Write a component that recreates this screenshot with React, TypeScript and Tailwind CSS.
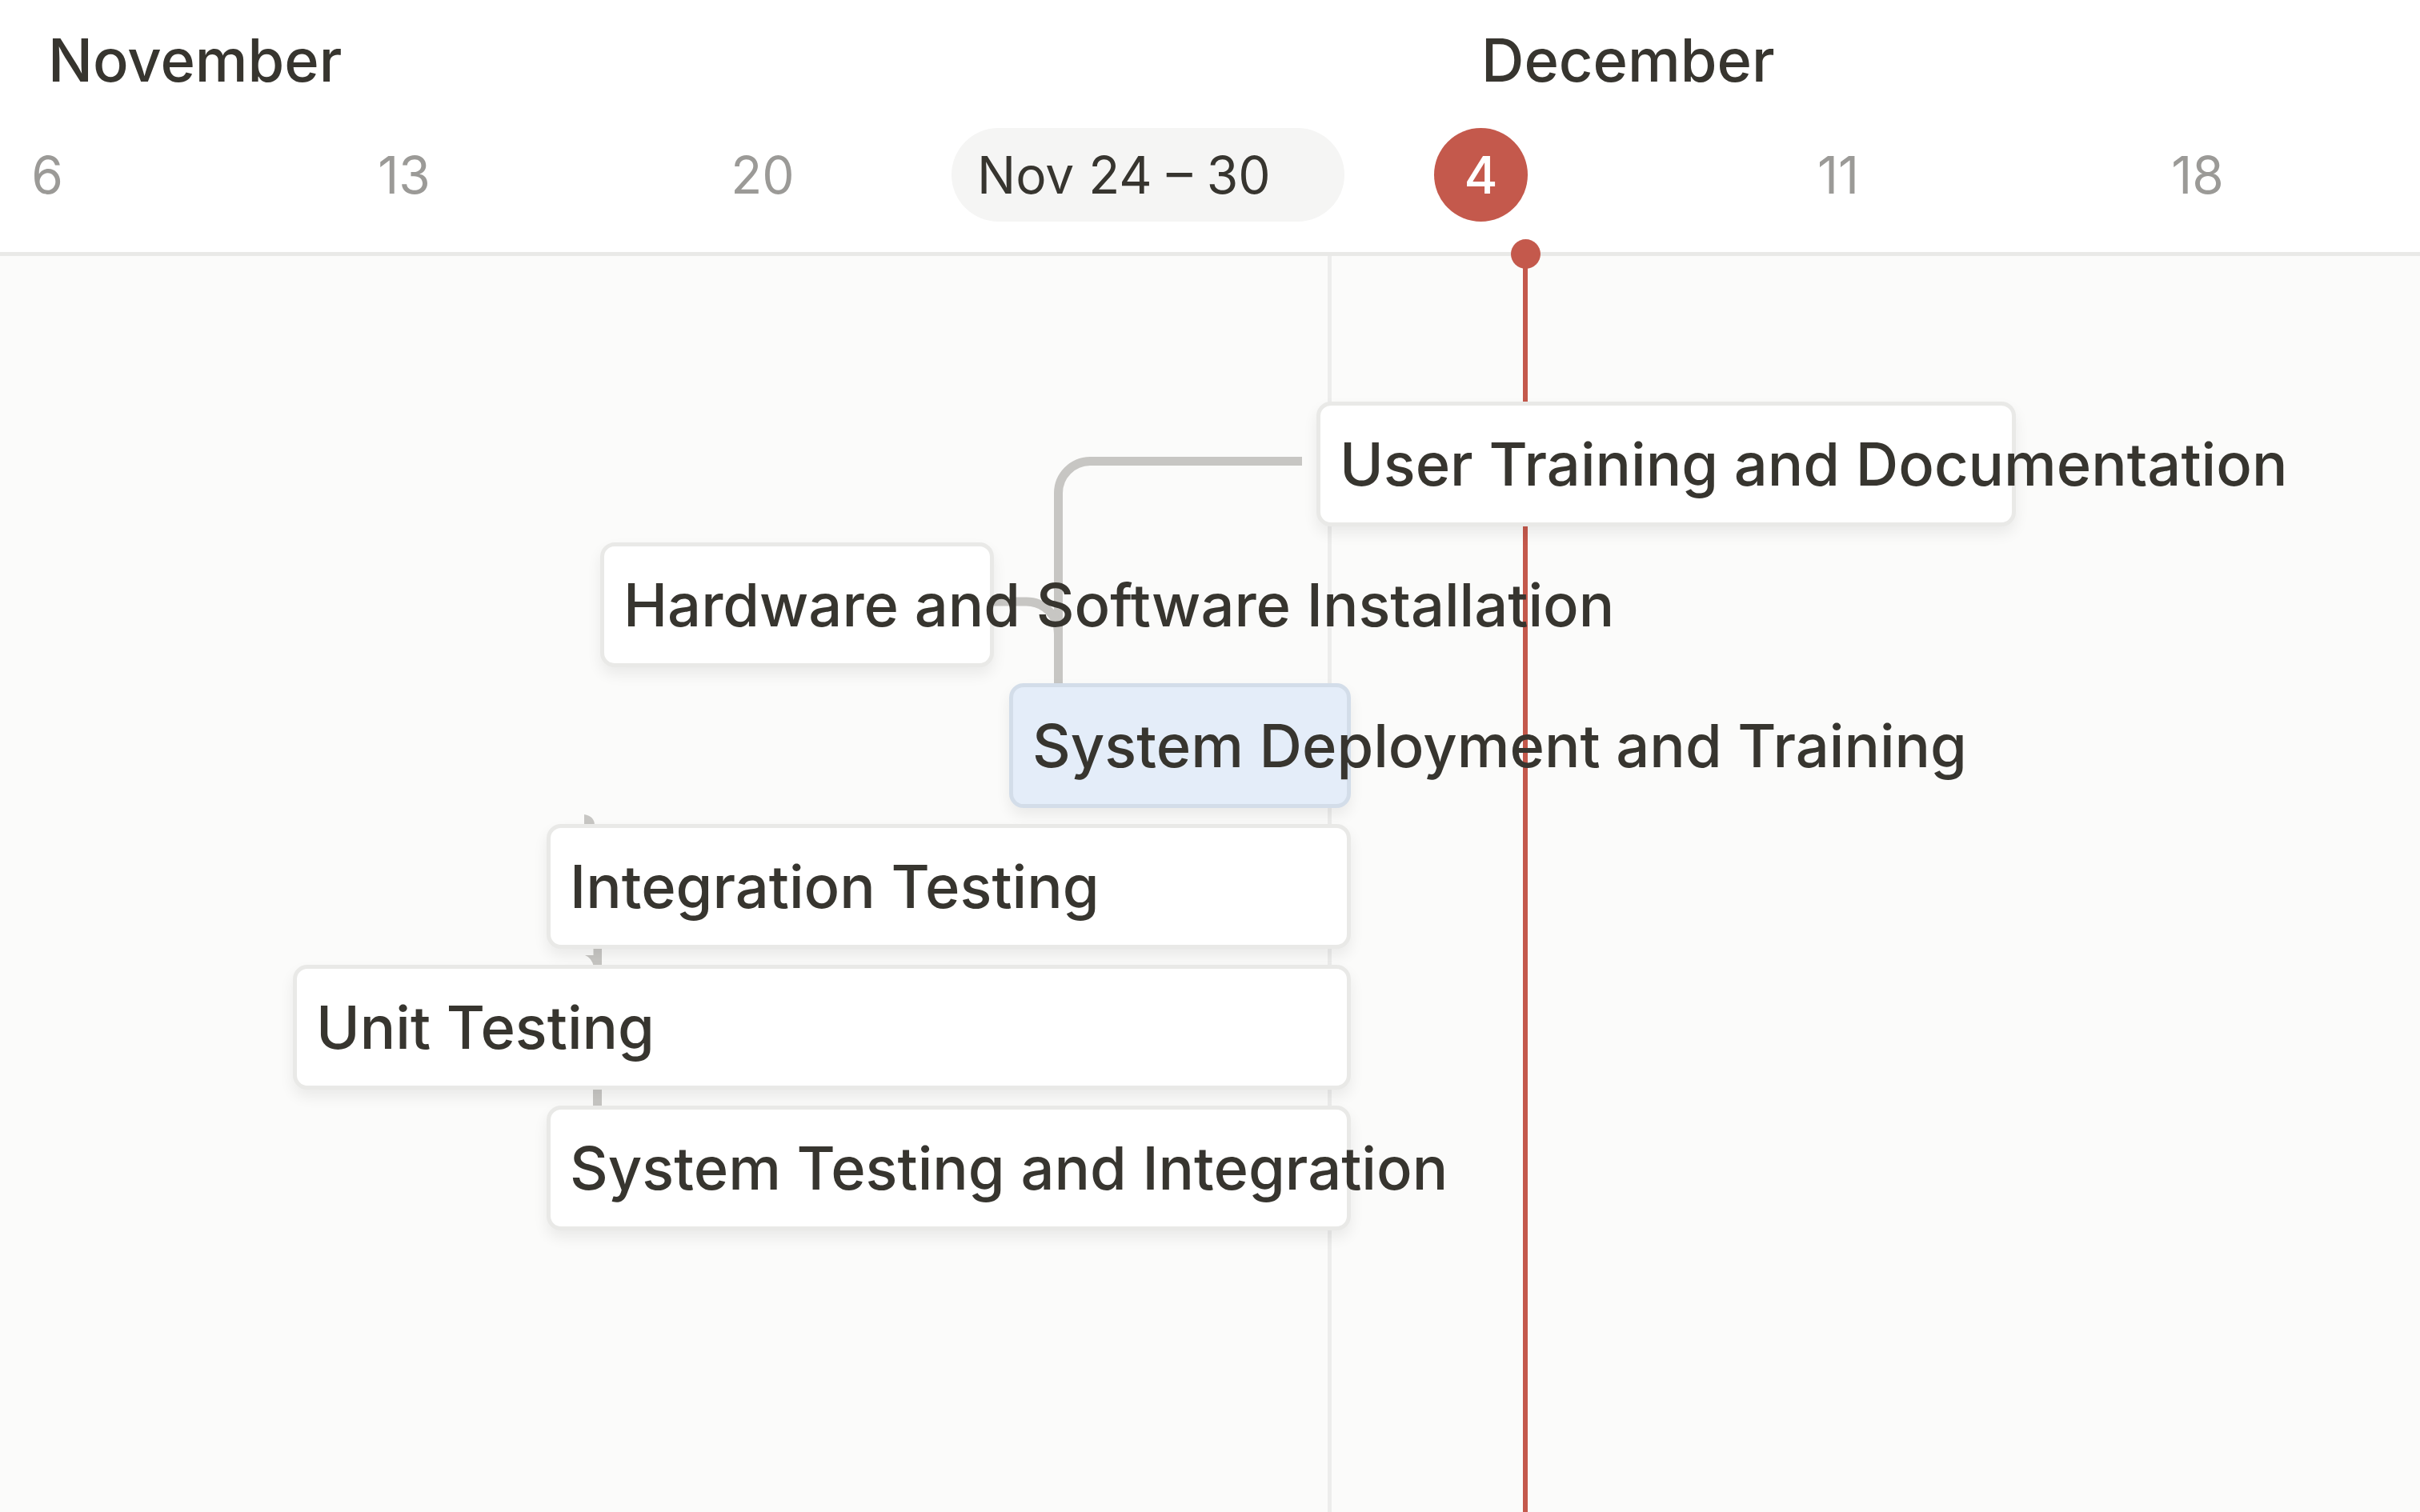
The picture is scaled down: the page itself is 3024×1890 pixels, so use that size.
import React from "react";

const bars = [
  { label: "User Training and Documentation", cls: "ml-[1645px] w-[874px] bg-white border-[#e9e9e7]" },
  { label: "Hardware and Software Installation", cls: "ml-[750px] w-[492px] bg-white border-[#e9e9e7]" },
  { label: "System Deployment and Training", cls: "ml-[1261px] w-[427px] bg-[#e4edf9] border-[#d3dde9]" },
  { label: "Integration Testing", cls: "ml-[683px] w-[1005px] bg-white border-[#e9e9e7]" },
  { label: "Unit Testing", cls: "ml-[366px] w-[1322px] bg-white border-[#e9e9e7]" },
  { label: "System Testing and Integration", cls: "ml-[683px] w-[1005px] bg-white border-[#e9e9e7]" },
];

export default function App() {
  return (
    <div className="relative flex h-[1890px] w-[3024px] flex-col overflow-hidden bg-white font-[Inter,sans-serif] text-[#37352f]">
      <header className="h-[320px] shrink-0 border-b-[5px] border-[#e9e9e7] bg-white">
        <div className="flex h-[160px] pt-[38px] text-[74px] font-medium leading-[74px]">
          <div className="ml-[60px] w-[1791px]">November</div>
          <div>December</div>
        </div>
        <div className="flex h-[117px] items-center text-[64px] leading-none">
          <div className="w-[118px] text-center text-[#9b9a97]">6</div>
          <div className="ml-[327px] w-[120px] text-center text-[#9b9a97]">13</div>
          <div className="ml-[328px] w-[120px] text-center text-[#9b9a97]">20</div>
          <div className="ml-[176px] flex h-[117px] w-[491px] items-center rounded-full bg-[#f5f5f4] pl-[32px] text-[#37352f]">
            Nov 24 – 30
          </div>
          <div className="ml-[112px] flex h-[117px] w-[117px] items-center justify-center rounded-full bg-[#c4594c] font-medium text-white">
            4
          </div>
          <div className="ml-[328px] w-[120px] text-center text-[#9b9a97]">11</div>
          <div className="ml-[329px] w-[120px] text-center text-[#9b9a97]">18</div>
        </div>
      </header>

      <main className="relative flex-1 bg-[#fbfbfa]">
        <svg className="pointer-events-none absolute left-0 top-0" width="3024" height="1570" viewBox="0 0 3024 1570">
          <rect x="1659" y="0" width="5" height="1570" fill="#ededec" />
          <path d="M1627 256.5 H1362 A40 40 0 0 0 1322.5 296.5 V540" fill="none" stroke="#c7c6c3" strokeWidth="11" />
          <path d="M1236 432 H1282 A40 40 0 0 1 1322.5 472 V540" fill="none" stroke="#c7c6c3" strokeWidth="11" />
          <path d="M730 712 V698 Q743 700 743 712 Z" fill="#c7c6c3" />
          <path d="M741.5 866 H752 V888 H741.5 Z" fill="#c7c6c3" />
          <path d="M731 874 Q739 877 742 888 L742 874 Z" fill="#c7c6c3" />
          <rect x="741" y="1040" width="11" height="26" fill="#c7c6c3" />
          <rect x="1903" y="0" width="6" height="1570" fill="#c4594c" />
        </svg>
        <div className="relative flex flex-col gap-[20px] pt-[182px]">
          {bars.map((b) => (
            <div
              key={b.label}
              className={`${b.cls} flex h-[156px] shrink-0 items-center self-start whitespace-nowrap rounded-[18px] border-[5px] pl-[24px] text-[74px] font-medium leading-none shadow-[0_9px_18px_rgba(15,15,15,0.07)]`}
            >
              {b.label}
            </div>
          ))}
        </div>
      </main>

      <div className="absolute left-[1888px] top-[299px] h-[37px] w-[37px] rounded-full bg-[#c4594c]" />
    </div>
  );
}
